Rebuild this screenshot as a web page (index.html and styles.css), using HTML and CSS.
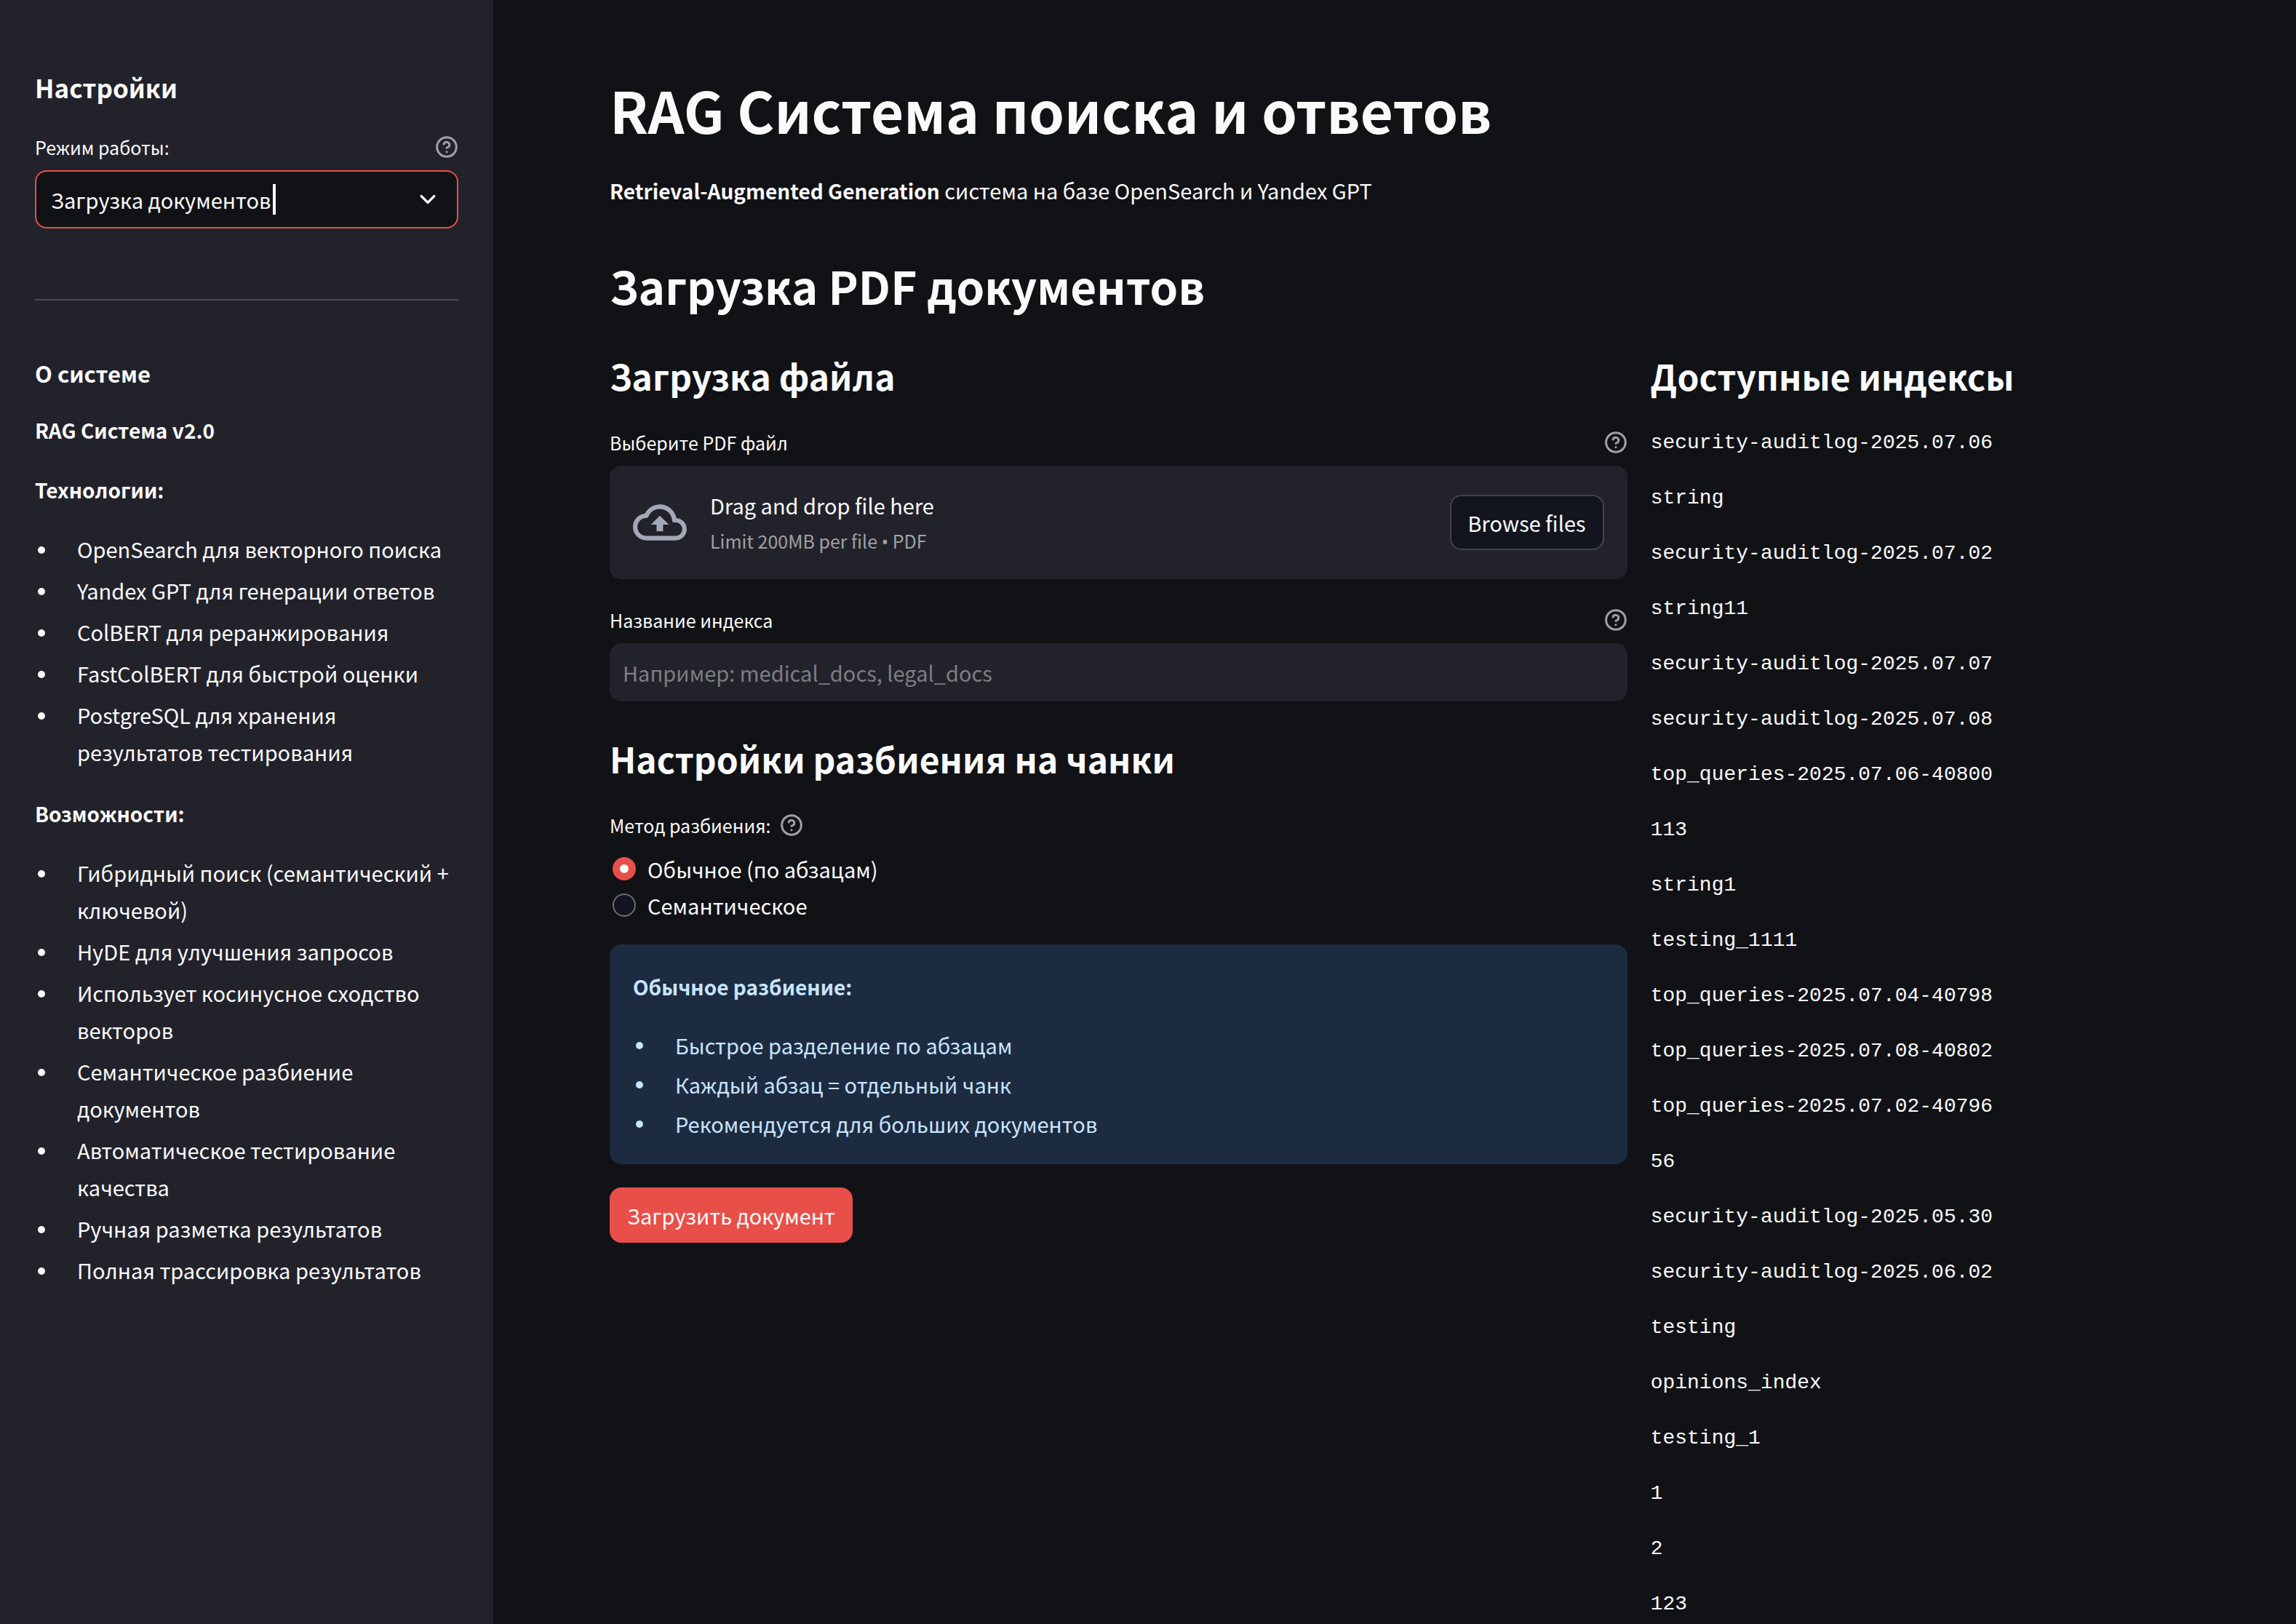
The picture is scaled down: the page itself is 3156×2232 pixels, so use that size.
FILE: index.html
```html
<!DOCTYPE html>
<html lang="ru">
<head>
<meta charset="utf-8">
<title>RAG Система поиска и ответов</title>
<link rel="stylesheet" href="styles.css">
</head>
<body>
<svg class="sprite" aria-hidden="true">
  <symbol id="help" viewBox="0 0 24 24">
    <g fill="none" stroke="currentColor" stroke-width="2.25" stroke-linecap="round" stroke-linejoin="round">
      <circle cx="12" cy="12" r="10"></circle>
      <path d="M9.09 9a3 3 0 0 1 5.83 1c0 2-3 3-3 3"></path>
      <path d="M12 17h.01"></path>
    </g>
  </symbol>
</svg>
<div class="app">
  <aside class="sidebar">
    <h2 class="side-title">Настройки</h2>
    <div class="field">
      <div class="field-head">
        <label for="mode">Режим работы:</label>
        <svg class="help"><use href="#help"></use></svg>
      </div>
      <div class="select-box">
        <select id="mode"><option>Загрузка документов</option></select>
        <span class="caret"></span>
        <svg class="chevron" viewBox="0 0 8 8"><path d="M1.5 2.75 4 5.25 6.5 2.75" fill="none" stroke="currentColor" stroke-width="1" stroke-linecap="round" stroke-linejoin="round"></path></svg>
      </div>
    </div>
    <hr class="rule">
    <h3 class="side-subtitle">О системе</h3>
    <div class="prose">
      <p><strong>RAG Система v2.0</strong></p>
      <p><strong>Технологии:</strong></p>
      <ul>
        <li>OpenSearch для векторного поиска</li>
        <li>Yandex GPT для генерации ответов</li>
        <li>ColBERT для реранжирования</li>
        <li>FastColBERT для быстрой оценки</li>
        <li>PostgreSQL для хранения результатов тестирования</li>
      </ul>
      <p><strong>Возможности:</strong></p>
      <ul>
        <li>Гибридный поиск (семантический + ключевой)</li>
        <li>HyDE для улучшения запросов</li>
        <li>Использует косинусное сходство векторов</li>
        <li>Семантическое разбиение документов</li>
        <li>Автоматическое тестирование качества</li>
        <li>Ручная разметка результатов</li>
        <li>Полная трассировка результатов</li>
      </ul>
    </div>
  </aside>
  <main class="main">
    <h1 class="title">RAG Система поиска и ответов</h1>
    <p class="lead"><strong>Retrieval-Augmented Generation</strong> система на базе OpenSearch и Yandex GPT</p>
    <h2 class="heading">Загрузка PDF документов</h2>
    <div class="columns">
      <form class="upload">
        <h3 class="subheading">Загрузка файла</h3>
        <div class="field">
          <div class="field-head">
            <label for="browse">Выберите PDF файл</label>
            <svg class="help"><use href="#help"></use></svg>
          </div>
          <div class="dropzone">
            <svg class="cloud" viewBox="0 0 24 24"><path fill="currentColor" d="M19.35 10.04A7.49 7.49 0 0 0 12 4C9.11 4 6.6 5.64 5.35 8.04A5.994 5.994 0 0 0 0 14c0 3.31 2.69 6 6 6h13c2.76 0 5-2.24 5-5 0-2.64-2.05-4.78-4.65-4.96zM19 18H6c-2.21 0-4-1.79-4-4 0-2.05 1.53-3.76 3.56-3.97l1.07-.11.5-.95A5.469 5.469 0 0 1 12 6c2.62 0 4.88 1.86 5.39 4.43l.3 1.5 1.53.11A2.98 2.98 0 0 1 22 15c0 1.65-1.35 3-3 3zM8 13h2.55v3h2.9v-3H16l-4-4z"></path></svg>
            <div class="drop-text">
              <span>Drag and drop file here</span>
              <small>Limit 200MB per file <b class="dot">•</b> PDF</small>
            </div>
            <button type="button" class="browse" id="browse">Browse files</button>
          </div>
        </div>
        <div class="field">
          <div class="field-head">
            <label for="index-name">Название индекса</label>
            <svg class="help"><use href="#help"></use></svg>
          </div>
          <input class="text-input" id="index-name" type="text" placeholder="Например: medical_docs, legal_docs">
        </div>
        <h3 class="subheading subheading-next">Настройки разбиения на чанки</h3>
        <fieldset class="radios">
          <legend class="legend">Метод разбиения: <svg class="help"><use href="#help"></use></svg></legend>
          <label class="radio"><input type="radio" name="method" checked>Обычное (по абзацам)</label>
          <label class="radio"><input type="radio" name="method">Семантическое</label>
        </fieldset>
        <div class="info">
          <p><strong>Обычное разбиение:</strong></p>
          <ul>
            <li>Быстрое разделение по абзацам</li>
            <li>Каждый абзац = отдельный чанк</li>
            <li>Рекомендуется для больших документов</li>
          </ul>
        </div>
        <button type="button" class="submit">Загрузить документ</button>
      </form>
      <section class="indexes">
        <h3 class="subheading">Доступные индексы</h3>
        <div class="index-list">
          <code>security-auditlog-2025.07.06</code>
          <code>string</code>
          <code>security-auditlog-2025.07.02</code>
          <code>string11</code>
          <code>security-auditlog-2025.07.07</code>
          <code>security-auditlog-2025.07.08</code>
          <code>top_queries-2025.07.06-40800</code>
          <code>113</code>
          <code>string1</code>
          <code>testing_1111</code>
          <code>top_queries-2025.07.04-40798</code>
          <code>top_queries-2025.07.08-40802</code>
          <code>top_queries-2025.07.02-40796</code>
          <code>56</code>
          <code>security-auditlog-2025.05.30</code>
          <code>security-auditlog-2025.06.02</code>
          <code>testing</code>
          <code>opinions_index</code>
          <code>testing_1</code>
          <code>1</code>
          <code>2</code>
          <code>123</code>
        </div>
      </section>
    </div>
  </main>
</div>
</body>
</html>
```
FILE: styles.css
```css
* { box-sizing: border-box; }

body {
  margin: 0;
  background: #111216;
  color: #fafafa;
  font-family: "Noto Sans CJK SC", "Noto Sans", sans-serif;
  font-size: 29px;
  line-height: 51px;
}

h1, h2, h3, p, ul, fieldset { margin: 0; padding: 0; border: 0; }
button, input, select { font: inherit; color: inherit; }
strong { font-size: 28px; }

.sprite { position: absolute; width: 0; height: 0; }

.app { display: flex; height: 100vh; overflow: hidden; }

/* Sidebar */
.sidebar {
  flex: 0 0 678px;
  padding: 96px 48px;
  background: #22222b;
}
.side-title { font-size: 35px; line-height: 48px; font-weight: 700; }
.side-subtitle { font-size: 31px; line-height: 40px; font-weight: 700; margin-bottom: 32px; }
.sidebar .field { margin-top: 38px; }
.rule { margin: 97px 0 80px; border: 0; border-top: 2px solid #4a4a51; }

.prose { display: flex; flex-direction: column; }
.prose p { margin-bottom: 30px; }
ul { list-style: none; }
li { position: relative; padding-left: 58px; margin-bottom: 6px; }
li::before {
  content: "";
  position: absolute;
  left: 4px;
  top: 22px;
  width: 10px;
  height: 10px;
  border-radius: 50%;
  background: currentColor;
}
.prose ul { margin-bottom: 27px; }

/* Form fields */
.field-head {
  display: flex;
  justify-content: space-between;
  align-items: center;
  height: 40px;
  margin-bottom: 12px;
  font-size: 25px;
  line-height: 40px;
}
.help { width: 32px; height: 32px; color: #a0a1a3; flex: none; }

.select-box {
  display: flex;
  align-items: center;
  height: 80px;
  padding: 0 26px 0 20px;
  border: 2px solid #e94f49;
  border-radius: 16px;
  background: #111216;
}
.select-box select {
  appearance: none;
  border: 0;
  padding: 0;
  background: none;
  outline: 0;
}
.caret { width: 4px; height: 42px; margin-left: 2px; background: #fafafa; }
.chevron { width: 28px; height: 28px; margin-left: auto; }

/* Main area */
.main { flex: 1; min-width: 0; padding: 96px 188px 0 160px; }
.title { font-size: 78px; line-height: 108px; font-weight: 700; }
.lead { margin-top: 32px; }
.heading { margin-top: 62px; font-size: 62px; line-height: 84px; font-weight: 700; }
.columns { display: grid; grid-template-columns: 2fr 1fr; gap: 32px; margin-top: 48px; }
.subheading { margin-bottom: 38px; font-size: 48px; line-height: 68px; font-weight: 700; }
.subheading-next { margin-top: 8px; }
.upload { display: flex; flex-direction: column; align-items: stretch; }
.upload .field { margin-bottom: 36px; }

.dropzone {
  display: flex;
  align-items: center;
  height: 156px;
  padding: 32px;
  border-radius: 16px;
  background: #22222b;
}
.cloud { width: 74px; height: 74px; color: #a3a8b8; }
.drop-text { display: flex; flex-direction: column; margin: 0 auto 0 32px; }
.drop-text small { font-size: 25px; line-height: 47px; color: #a0a1a3; }
.dot { font-family: "Noto Sans", sans-serif; font-weight: 400; }
.browse {
  height: 76px;
  padding: 0 23px;
  border: 2px solid #434348;
  border-radius: 16px;
  background: #12151d;
}
.text-input {
  display: block;
  width: 100%;
  height: 80px;
  padding: 0 18px;
  border: 0;
  border-radius: 16px;
  background: #22222b;
}
.text-input::placeholder { color: #7e7e82; opacity: 1; }

.legend {
  display: flex;
  align-items: center;
  gap: 12px;
  margin-bottom: 15px;
  padding: 0;
  font-size: 25px;
  line-height: 40px;
}
.radio { display: flex; align-items: center; gap: 16px; height: 50px; padding-left: 4px; }
.radio input {
  appearance: none;
  width: 32px;
  height: 32px;
  margin: 0;
  border: 2px solid #6c6d70;
  border-radius: 50%;
  background: #12151d;
}
.radio input:checked { border: 10px solid #e94f49; background: #fafafa; }

.info {
  margin-top: 29px;
  padding: 32px;
  border-radius: 16px;
  background: #1d2b41;
  color: #c7e5fd;
}
.info p { margin-bottom: 30px; }
.info li { margin-bottom: 6px; line-height: 48px; }
.info li:last-child { margin-bottom: 0; }
.info li::before { top: 20px; }
.submit {
  align-self: flex-start;
  height: 76px;
  margin-top: 32px;
  padding: 0 24px;
  border: 0;
  border-radius: 16px;
  background: #e94f49;
}

.index-list { display: flex; flex-direction: column; gap: 34px; }
.index-list code { font-family: "Liberation Mono", monospace; font-size: 28px; line-height: 42px; }
```
